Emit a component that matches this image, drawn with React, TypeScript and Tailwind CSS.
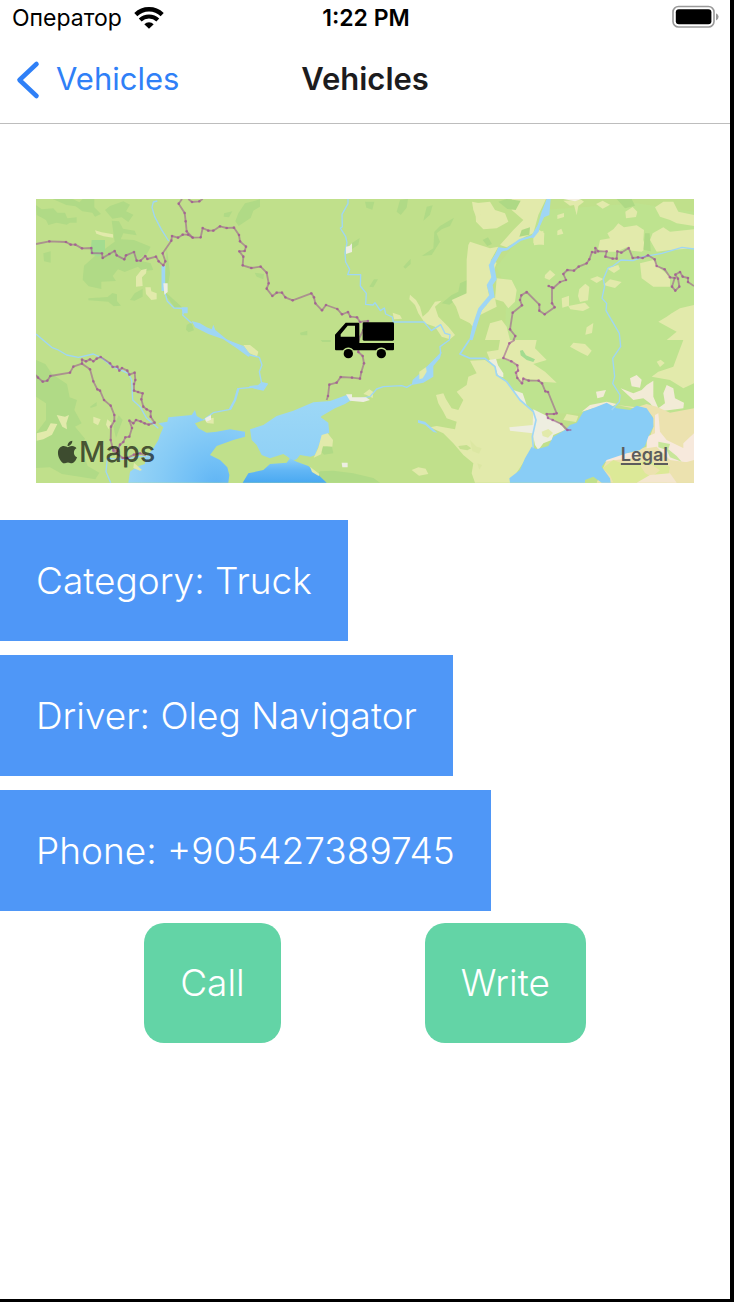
import React from "react";
import { FaApple } from "react-icons/fa";

const details = [
  { label: "Category", value: "Truck" },
  { label: "Driver", value: "Oleg Navigator" },
  { label: "Phone", value: "+905427389745" },
];

function WifiIcon() {
  return (
    <svg viewBox="0 0 30 22" className="h-[22px] w-[30px]" aria-hidden="true">
      <g fill="none" stroke="#000">
        <path d="M1.8 7.6a19 19 0 0 1 26.4 0" strokeWidth="4.4" />
        <path d="M6.2 13a12.5 12.5 0 0 1 17.6 0" strokeWidth="4" />
      </g>
      <path d="M10.3 17.2a6.8 6.8 0 0 1 9.4 0L15 21.8z" />
    </svg>
  );
}

function BatteryIcon() {
  return (
    <svg viewBox="0 0 48 24" className="h-6 w-12" aria-label="Battery full">
      <rect x="1" y="1.5" width="41" height="20.5" rx="5.5" fill="none" stroke="#999" strokeWidth="1.6" />
      <rect x="3.8" y="4.2" width="35.6" height="15" rx="3" />
      <path d="M44 8.2q2.6 1 2.6 3.6T44 15.4z" fill="#999" />
    </svg>
  );
}

function Forests() {
  return (
    <g fill="#b0da86">
      <path d="M18 45L35 58 70 55 82 68 105 68 112 85 140 82 140 98 120 98 110 104 80 98 55 105 48 90 20 75zM68 27h60l20 10 10-10h35v25l20 20-18 8-8-12-30-4-20-15-28-4zM225 60l15-12 40-14 20 10-12 20 22 10-15 22-20-14-28 4zM245 92l22 2 12 22 35 6 6 14-40-6-8 18 40 2 50 20-10 20-30 20 40 10 8 20-32 4-14-14-40 16-20-8-16 20 10 15-44 2v22l-38-8-18-20 4-42 32-28 60-44z" />
      <path d="M40 190l22-6v34l-20-4zM410 170l10 80-10 60 45 40-20 4-35-48 8-80zM175 325l58-4 14-12 14 4v20l12 14-22 2-16-14-60-4zM300 330l14-20 24-14v24l-24 12z" />
      <path d="M625 70l20-30 45-12v22l-20 12-8 22-36 24-10-14zM582 70l25-6-10 18-16-2zM470 405l14-8 8 24-16 6-8-8z" />
      <g transform="translate(660 0)">
        <path d="M345 35h28l-6 24-18-6zM450 30l24-3-4 26-18 22-12-10zM530 50l18-4-8 28-20 18zM612 83L600 108 575 118 560 130 570 155 545 195 515 198 550 175 553 125 570 108zM305 160l24-16-4 20-20 14zM460 230l22-24v16l-16 14zM358 290l14-22h12l-14 24zM14 248l28 4-2 16-20-8zM150 428l22-6v14h-20zM575 340l30-25 20-10 5-25 22-10-4 45-30 14-20 15z" />
      </g>
      <g transform="translate(0 450)">
        <path d="M18 60l28 12 20 30 45 30 8 40 22 8-8 30 22 40-20 10 30 36-12 22 20 60 35 20-12 20-100-16-36-20-42 2V280l30-40v-50l-30-20zM180 200l20-14v12l-18 6zM250 260l16-34 12 14-20 54z" />
        <path d="M845 425L870 394 910 392 970 400 1030 414 1050 428H845zM872 0h30v6h-25zM865 325l40-10 5 25-28 4z" />
      </g>
    </g>
  );
}

function EasternPlains() {
  return (
    <g transform="translate(1320 0)">
      <path d="M215 60L500 40 672 65V670H60L105 430 110 300 80 230z" fill="#bee38f" />
      <g fill="#e2eaab">
        <path d="M15 40L60 35 75 60 105 70 115 95 80 115 40 118 18 95zM125 27H228L205 75 190 130 165 140 110 172 90 165 130 120 160 90 125 60zM190 135L220 122 222 165 190 160z" />
        <path d="M6 35L30 40 34 110 22 90 10 60zM0 155L60 175 85 170 60 215 68 260 52 290 58 320 25 360 8 410 0 400 -30 385 -42 350 -55 330 -10 310 -10 210 -5 165zM75 325L60 310 50 345 35 360 20 400 30 375 80 350z" />
        <path d="M60 210l20 8-8 22-12-10zM80 265L125 270 140 300 135 335 115 355 100 335 75 328zM60 400l35-10 15 20 10 40H45zM192 140l16-20 15 10-2 32-29 4zM262 75l20-6v12l-20 6zM262 122l12-6 6 15-18 5zM225 255l15-15 16 14-18 16-14-6zM275 325l22-8v30l-20 6zM295 348l50-10 14 15-20 10-38-5zM360 267l22-8 18 8-20 12zM328 297l18-16 12 10-4 40-24 5-6-18zM350 412l20-13-4 30-20 5z" />
        <path d="M280 32L300 47 312 45 320 76 325 48 342 35 335 30zM378 42l20-10 22 12-22 12zM466 65l22-14 14 14-4 16-30 4zM384 178L390 150 420 145 412 130 430 118 445 100 462 112 500 106 522 120 520 150 528 175 515 185 485 182 470 172 440 185 410 185zM540 150L548 130 580 112 600 125 672 118V175L600 180 560 185zM510 220L550 210 570 235 600 260 600 290 550 290 515 265zM555 52L580 35H610L625 65 672 75V108L620 100 600 90 570 80zM565 395L590 380 605 370 630 355 672 345V450H590L620 425zM410 235l35-10 5 12-18 12zM400 285l20-17 35 8-20 18z" />
      </g>
      <path d="M280 27h55l-20 7z" fill="#f3efe0" />
      <path d="M85 35l25-8 42 5-15 28-25-3zM38 150l16-8 12 20-14 6zM155 120l25-8-2 22-30 6zM525 130h14l3 54-22-5zM440 27h45l10 20-30 8z" fill="#aed985" />
    </g>
  );
}

function SouthEast() {
  return (
    <g transform="translate(1320 450)">
      <path
        d="M0 62L45 60 75 80 80 105 110 125 150 180 190 215 198 240 190 320 165 360 120 428H15L5 400 10 370 -20 345 -50 310 -80 280 -120 262 -100 258 -45 268 -40 245 -70 235 -80 215 -95 190 -102 165 -80 160 -72 178 -55 205 -35 210 -20 180 -40 155 -10 135 -5 110 20 100z"
        fill="#e2eaab"
      />
      <path d="M-35 318l25-3 14 10-12 6-22-4z" fill="#c5e08f" />
      <path
        d="M90 0H200L195 25 230 60 190 72 225 95 260 128 215 125 200 120 165 116 155 132 135 100 140 75 98 55 60 60 50 35 85 30zM300 20l10-12 35 4 20 20-12 16-20-10zM560 65l12-6 12 10-14 12zM625 40L640 0H672V130L640 145 600 120 545 110 565 95 610 80zM280 240L290 222 325 228 318 246z"
        fill="#e2eaab"
      />
      <path d="M150 32L158 30 168 46 195 58 190 66 170 60 152 46z" fill="#a3dc90" />
      <path d="M190 208L225 225 275 255 285 270 250 285 245 300 220 310 205 330 195 315 188 280 120 272 118 262 188 255z" fill="#eeeee0" />
      <path d="M215 275l20-8 14 12-15 14-16-5z" fill="#e2eaab" />
      <path d="M55 60L78 56 84 76 100 100V112L84 108 76 82zM130 150L158 160 170 195 150 182z" fill="#eeeedb" />
      <path
        d="M335 215L360 195 410 185 440 192 425 200 370 205zM452 145L490 160 515 150 530 135 550 122V170L565 205 585 190 580 160 590 135 610 145 615 175 642 188 640 205 560 215 540 190 520 175 490 180zM480 115l20-10 15 14-5 24-25-4zM378 155l30-5-8 20-18 5z"
        fill="#f2ebd6"
      />
      <path d="M440 195L490 205 530 192 560 200 600 218 672 205V428H380L410 360 530 320 550 260 548 230 525 205z" fill="#ece2af" />
      <path d="M555 225L565 220 570 275 590 300 672 340V370L600 360 560 320 530 325 530 290 555 280zM640 310L672 280V350L640 335zM380 370L450 340 500 338 505 352 420 362z" fill="#f7e9dc" />
      <path d="M398 385L430 360 470 375 530 362 560 370 590 375 620 395 610 428H430L420 405z" fill="#dce997" />
      <path d="M510 376l30-5 30 20-25 20-20-12zM600 380L672 360V428H590z" fill="#ece2af" />
      <path d="M500 428L540 405 600 400 620 428z" fill="#f4e6cf" />
      <path d="M565 305L600 312 595 328 620 348 635 365 600 352 590 330 565 322z" fill="#c8e69a" />
      <path d="M0 300l20 20 15 5-8 16-20-8zM22 370l14 5-8 14z" fill="#dce7a3" />
      <path
        d="M120 428L118 415 150 390 165 355 185 320 200 328 235 318 250 290 285 270 300 255 320 248 340 215 380 200 410 188 440 205 480 210 500 197 530 205 550 235 550 260 535 290 525 318 510 330 470 340 410 360 395 380 420 415 422 428H395L370 410 345 420V428z"
        fill="#89cdf6"
      />
    </g>
  );
}

function Coast() {
  return (
    <g transform="translate(0 450)">
      <path
        d="M295 428L300 395 320 380 345 372 345 355 370 325 385 300 390 285 400 262 385 250 412 245 415 232 485 225 495 210 500 228 522 240 495 250 505 265 530 278 560 275 600 268 645 275 645 290 610 300 560 318 540 345 570 360 592 382 598 405 595 428z"
        fill="url(#blacksea)"
      />
      <path
        d="M660 268L700 255 740 228 790 212 850 187 900 183 950 165 968 178 945 192 915 205 875 228 872 232 895 248 898 278 876 292 855 345 842 350 810 345 800 358 785 362 775 352 760 342 720 355 695 345 680 315 665 300z"
        fill="url(#azov)"
      />
      <path
        d="M638 428L655 400 700 390 720 372 770 368 780 355 800 365 835 378 860 400 890 428z"
        fill="url(#deep)"
      />
      <g fill="#e2eaab">
        <path d="M80 225l25 5 12-5-8 25 2 18-14-8zM20 280l30-8 12-22 20 2-16 32-26 14-20 4zM190 230l22 8-8 18-14-8zM232 238l12 10-8 20-8-14zM640 15l20 0 25 20-4 15-25-12zM523 238l28-5v18l-20-2zM875 285l18-5 16 20-2 20-28-2-6 25-22 10 14-30zM1145 390l20-8 22 4 8 16-28 5zM1000 162l18-14 12 8-2 18-20-10zM840 380l28 22-2 6-20-12zM312 368l24 22-6 2-20-8z" />
      </g>
    </g>
  );
}

function Rivers() {
  return (
    <g fill="none" stroke="#9fd6f5" strokeLinejoin="round" strokeWidth="4">
      <path d="M382 33L370 36 366 52 374 80 394 118 416 153M402 298L412 334 432 354 464 356 458 375 485 400" />
      <path d="M400 228v75" strokeWidth="11" />
      <path d="M455 352h18v18h-16zM485 393L510 400 530 412 545 418 550 404 556 420 590 448 640 472 660 498 655 500 620 475 580 448 535 432 495 412z" fill="#9fd6f5" stroke="none" />
      <path d="M18 432L65 472 85 480 110 495 145 502 190 492 212 502 248 530 295 550 305 570 308 630 330 650 350 685 385 715" />
      <path d="M588 450L640 470 660 495 688 502 696 525 688 545 695 580M690 590L625 596 615 630 600 658 550 668 520 690" />
      <path d="M625 595L615 630 600 658" strokeWidth="7" />
      <path d="M660 590L685 587 695 578 712 582 700 600 680 596z" fill="#9fd6f5" />
      <path d="M242 878L228 845 232 805 280 808 330 800 372 798" />
      <g transform="translate(660 0)">
        <path d="M294 27V41L276 73 277 111 271 114 287 140 291 158 285 188 287 216 299 238 293 254H332L331 288 349 310 347 343 369 345 375 338 391 362 403 354 407 372 427 381 430 396H522L544 422 572 404 585 430 600 434 598 450 570 470 572 490 550 515M485 583L470 592 455 587 400 590 380 597 360 620 320 628 300 632" />
        <path d="M575 485L570 505 550 528V560L520 578 485 585 488 570 510 550 535 525z" fill="#9fd6f5" stroke="none" />
        <path d="M658 450L630 492 660 505H705L735 530 740 555 770 575 810 630 850 665 858 690 847 740 850 775" strokeWidth="5" />
        <path d="M504 690L525 695 562 728 550 726 525 704 504 698z" fill="#9fd6f5" stroke="none" />
      </g>
      <g transform="translate(1320 0)">
        <path d="M235 27L228 60 210 100 190 138 150 150 110 178 90 178 65 215 70 260 58 290 66 320 32 360 12 410 2 450" strokeWidth="7" />
        <path d="M230 27H242L238 75 215 85 206 125 190 145 182 140 204 105 215 65zM85 172L120 176 95 185 72 225 80 268 68 285 74 322 58 330 35 362 20 410 8 450H-2L8 405 25 355 58 315 50 285 64 262 56 225 70 205z" fill="#9fd6f5" stroke="none" />
        <path d="M672 177L636 172 576 190 521 200 489 212 453 210 429 228 414 234 400 268 404 288 396 325 410 340 408 362 448 430 452 470 428 505 434 560 428 580 450 615 448 635 425 660" />
      </g>
    </g>
  );
}

function Borders() {
  return (
    <g
      fill="none"
      stroke="#9b5a91"
      strokeOpacity=".58"
      strokeWidth="5.5"
      strokeLinejoin="round"
      className="[&_polyline]:[marker-mid:url(#node)]"
    >
      <polyline points="18,162 58,154 108,156 122,164 136,164 156,175 184,174 186,189 216,190 218,204 238,192 254,183 260,196 283,208 288,196 312,186 320,212 332,212 346,198 352,207 378,200 386,214 400,226 406,214 398,190 424,152 426,138 444,143 458,134 474,134 488,143 512,142 518,114 535,122 550,122 570,109 590,114 612,113 627,135 630,154 648,170 644,183 628,184 640,200 638,226 664,234 692,230 710,248 716,280 710,296 727,318 740,308 756,308 766,322 788,331 844,310 852,322 856,340 876,361 888,345 922,357 936,373 954,366 961,380 981,382 990,396 1014,393 1000,420 985,450 985,486 998,498 1002,520 994,546 990,566 966,563 932,561 920,578 898,584 894,618 890,630" />
      <polyline points="456,27 446,41 464,69 467,94 470,124 488,143" />
      <polyline points="475,27 486,36 508,34 518,27" />
      <polyline points="18,555 24,563 38,575 52,572 61,558 120,548 130,530 156,521 180,538 190,574 202,598 210,602 222,630 242,647 253,675 253,693 243,710 242,750 250,782 278,804 292,804 312,794 330,790 348,796" />
      <polyline points="156,521 156,509 168,514 180,508 190,514 200,506 212,501 240,520 248,531 262,530 268,542 276,534 292,542 298,554 314,548 316,570 312,582 312,602 324,606 338,610 334,628 340,650 350,658 362,664 362,680 374,698 356,704 344,700 332,694 318,690 310,700 298,692 306,714 298,740 286,742 280,756 270,764 262,784 248,776" />
      <g transform="translate(1320 0)">
        <polyline points="130,450 136,438 120,418 128,368 156,346 150,330 154,316 170,306 208,344 208,362 224,373 254,352 246,340 246,292 236,288 250,294 270,276 288,270 280,252 292,240 312,242 326,230 350,220 358,208 366,186 376,188 376,174 384,184 410,184 406,200 428,206 440,206 442,184 454,188 476,174 488,204 504,202 518,204 534,196 554,208 560,228 584,238 600,262 614,264 606,290 616,302 628,290 624,266 616,254 630,246 638,260 654,264 654,276 672,288" />
        <polyline points="134,450 118,460 100,504 124,514 142,526 144,542 138,548 142,564 156,580 160,566 176,572 206,572 216,580 226,604 234,606 260,670 252,672 230,672 234,684 248,690 274,702 292,720 304,720" />
      </g>
    </g>
  );
}

function TruckIcon() {
  return (
    <g transform="translate(660 0)">
      <path
        d="M287 398H325Q328 398 328 401V459H432V478Q432 481 429 481H410A19 19 0 0 0 378 481H311A19 19 0 0 0 279 481H258Q255 481 255 478V434zM293 407L272 433V440H315V407z"
        fillRule="evenodd"
      />
      <rect x="338" y="397" width="94" height="55" rx="4" />
      <circle cx="295" cy="491" r="14" />
      <circle cx="394" cy="491" r="14" />
    </g>
  );
}

function VehicleMap() {
  return (
    <section aria-label="Vehicle location" className="relative mx-9 mt-[75px] h-[284px] overflow-hidden">
      <svg viewBox="18 27 1974 852" preserveAspectRatio="xMidYMid slice" className="block h-full w-full" aria-hidden="true">
        <defs>
          <marker id="node" markerUnits="userSpaceOnUse" markerWidth="10" markerHeight="10" refX="5" refY="5">
            <circle cx="5" cy="5" r="4" fill="#9f4694" fillOpacity=".6" />
          </marker>
          <radialGradient id="blacksea" gradientUnits="userSpaceOnUse" cx="560" cy="440" r="260">
            <stop offset="0" stopColor="#5fb4f4" />
            <stop offset=".3" stopColor="#72c0f6" />
            <stop offset=".65" stopColor="#86cbf6" />
            <stop offset="1" stopColor="#97d4f6" />
          </radialGradient>
          <linearGradient id="azov" x1="0" y1="0" x2="0" y2="1">
            <stop offset="0" stopColor="#9ed8f6" />
            <stop offset="1" stopColor="#90d1f6" />
          </linearGradient>
          <linearGradient id="deep" x1="0" y1="0" x2="0" y2="1">
            <stop offset="0" stopColor="#8ccff6" />
            <stop offset=".5" stopColor="#62b6f5" />
            <stop offset="1" stopColor="#4aa9f1" />
          </linearGradient>
        </defs>
        <rect x="18" y="27" width="1974" height="852" fill="#c0e08b" />
        <Forests />
        <path d="M185 150h40v34l-20 16-24-8z" fill="#a3dc90" />
        <g fill="#e2eaab">
          <path d="M195 121l20 6 34 6v10l-28-4-22-8zM334 240l16-4-2 14-12 12 2 26-20 2v-30zM346 292h16l2 12 16 6v18l-16 2-16-18z" />
          <path d="M1140 314L1158 330 1170 350 1178 380 1195 365 1215 335 1235 332 1215 350 1225 380 1240 395 1255 410 1275 435 1260 448 1235 440 1215 410 1185 400 1165 370 1155 345 1138 328zM1088 368l22 8 6 10-24 2z" />
        </g>
        <EasternPlains />
        <SouthEast />
        <Coast />
        <Rivers />
        <path d="M1168 545L1188 532 1190 545 1178 565 1168 568z" fill="#e2eaab" />
        <g fill="#eeeee2">
          <path d="M400 280h13v26l-10 8zM948 170l10-2 8-8v26l-18 6zM948 613h18v9h42l12 8-20 6-40-4zM935 818h18v14h-16zM525 685l18-10v14l-14 6z" />
        </g>
        <Borders />
        <TruckIcon />
      </svg>
      <div className="absolute bottom-[13px] left-5 flex items-center text-[29px] leading-9 font-medium text-black/65">
        <FaApple className="h-[26px] w-[23px]" aria-hidden="true" />
        <span>Maps</span>
      </div>
      <a href="#legal" className="absolute right-[26px] bottom-4 text-[18px] leading-6 font-semibold text-[#5c5c5c] underline decoration-2 underline-offset-2">
        Legal
      </a>
    </section>
  );
}

export default function App() {
  return (
    <div className="flex min-h-screen flex-col border-r-4 border-b-[3px] border-black bg-white font-['Inter',sans-serif]">
      <header className="border-b border-[#bdbdbd] text-black">
        <div className="grid h-9 grid-cols-3 items-center pr-[10px] pl-3">
          <div className="flex items-center gap-3 text-[23px]">
            <span>Оператор</span>
            <WifiIcon />
          </div>
          <time className="text-center text-[23px] font-semibold">1:22 PM</time>
          <div className="flex justify-end pb-[2px]">
            <BatteryIcon />
          </div>
        </div>
        <nav className="grid h-[87px] grid-cols-3 items-center px-4">
          <a href="#vehicles" className="flex items-center gap-4 text-[31px] text-[#2f80f7]">
            <svg viewBox="0 0 24 40" className="h-10 w-6" fill="none" stroke="currentColor" strokeWidth="4.6" strokeLinecap="round" strokeLinejoin="round" aria-hidden="true">
              <path d="M20.5 4L3.5 20l17 16" />
            </svg>
            <span>Vehicles</span>
          </a>
          <h1 className="text-center text-[31px] font-semibold text-[#1c1c1e]">Vehicles</h1>
        </nav>
      </header>
      <main>
        <VehicleMap />
        <div className="mt-[37px] flex flex-col items-start gap-[14px]">
          {details.map((item) => (
            <p key={item.label} className="bg-[#4f97f7] px-9 py-9 text-[37px] leading-[49px] font-[350] text-white">
              {item.label}: {item.value}
            </p>
          ))}
        </div>
        <div className="mt-3 flex justify-evenly">
          <button type="button" className="rounded-[20px] bg-[#63d4a6] px-9 py-9 text-[37px] leading-[48px] font-[350] text-white">
            Call
          </button>
          <button type="button" className="rounded-[20px] bg-[#63d4a6] px-9 py-9 text-[37px] leading-[48px] font-[350] text-white">
            Write
          </button>
        </div>
      </main>
    </div>
  );
}
